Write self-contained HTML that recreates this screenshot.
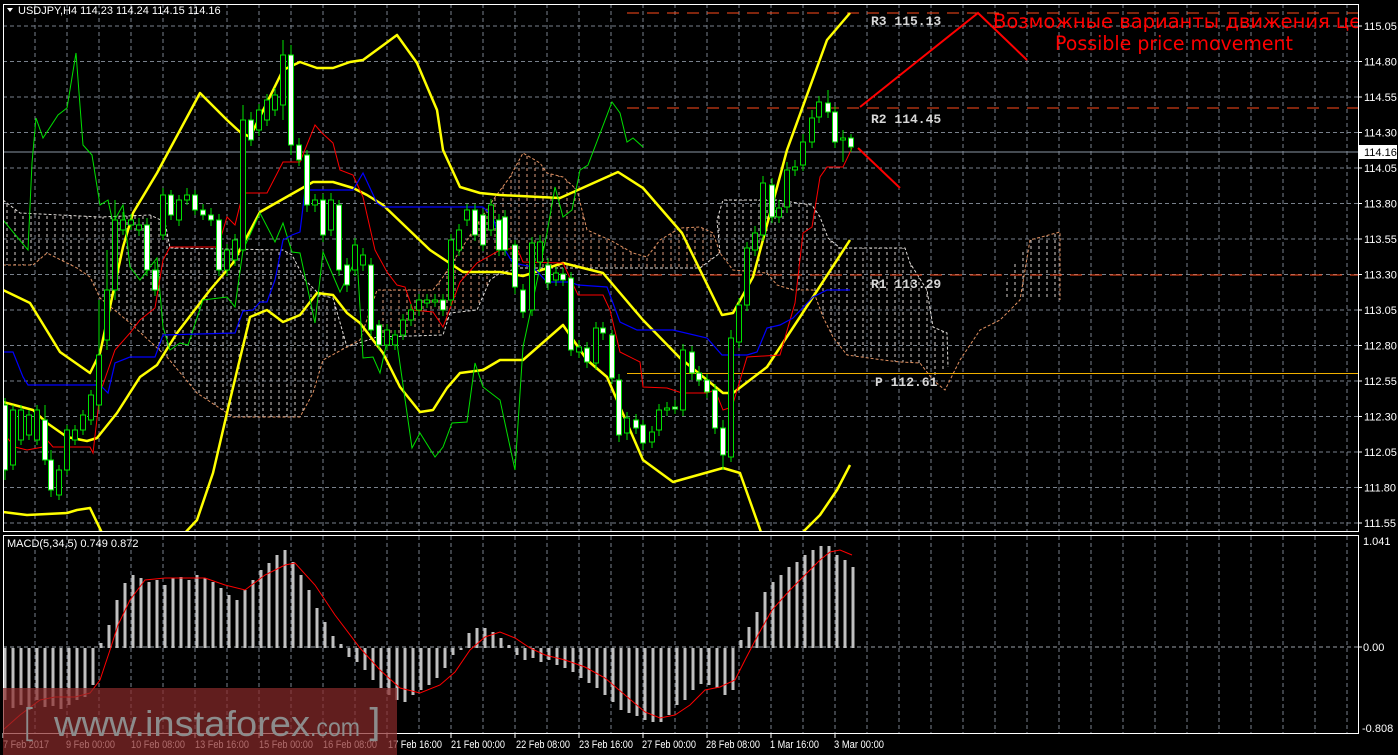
<!DOCTYPE html>
<html><head><meta charset="utf-8">
<style>
html,body{margin:0;padding:0;background:#000;}
svg{display:block;font-family:"Liberation Sans",sans-serif;}
</style></head>
<body>
<svg width="1398" height="755" viewBox="0 0 1398 755" xmlns="http://www.w3.org/2000/svg">
<defs>
<pattern id="hatchW" x="3" y="0" width="8" height="755" patternUnits="userSpaceOnUse">
<line x1="4" y1="0" x2="4" y2="755" stroke="#d8d0cc" stroke-width="1" stroke-dasharray="3,3"/>
</pattern>
<pattern id="hatchO" x="3" y="0" width="8" height="755" patternUnits="userSpaceOnUse">
<line x1="4" y1="0" x2="4" y2="755" stroke="#e0a080" stroke-width="1" stroke-dasharray="3,3"/>
</pattern>
<clipPath id="main"><rect x="3" y="4" width="1355" height="527"/></clipPath>
<clipPath id="macd"><rect x="3" y="536" width="1355" height="197"/></clipPath>
</defs>
<rect width="1398" height="755" fill="#000"/>

<!-- grid main -->
<g stroke="#79818c" stroke-width="1" stroke-dasharray="4,3" fill="none">
<path d="M3 26H1358M3 61.5H1358M3 97H1358M3 132.5H1358M3 168H1358M3 203.5H1358M3 239H1358M3 274.5H1358M3 310H1358M3 345.5H1358M3 381H1358M3 416.5H1358M3 452H1358M3 487.5H1358M3 523H1358"/>
<path d="M35 4V531M67 4V531M99 4V531M131 4V531M163 4V531M195 4V531M227 4V531M259 4V531M291 4V531M323 4V531M355 4V531M387 4V531M419 4V531M451 4V531M483 4V531M515 4V531M547 4V531M579 4V531M611 4V531M643 4V531M675 4V531M707 4V531M739 4V531M771 4V531M803 4V531M835 4V531M867 4V531M899 4V531M931 4V531M963 4V531M995 4V531M1027 4V531M1059 4V531M1091 4V531M1123 4V531M1155 4V531M1187 4V531M1219 4V531M1251 4V531M1283 4V531M1315 4V531M1347 4V531"/>
<path d="M35 536V733M67 536V733M99 536V733M131 536V733M163 536V733M195 536V733M227 536V733M259 536V733M291 536V733M323 536V733M355 536V733M387 536V733M419 536V733M451 536V733M483 536V733M515 536V733M547 536V733M579 536V733M611 536V733M643 536V733M675 536V733M707 536V733M739 536V733M771 536V733M803 536V733M835 536V733M867 536V733M899 536V733M931 536V733M963 536V733M995 536V733M1027 536V733M1059 536V733M1091 536V733M1123 536V733M1155 536V733M1187 536V733M1219 536V733M1251 536V733M1283 536V733M1315 536V733M1347 536V733"/>
<path d="M3 647H1358" stroke="#9aa0a8"/>
</g>

<g clip-path="url(#main)">
<!-- cloud -->
<polygon fill="url(#hatchW)" points="3,200 20,213 60,215 100,217 150,215 165,222 170,248 283,250 292,255 305,280 320,295 333,298 347,347 323,360 313,393 300,417 233,417 197,393 167,357 130,323 100,298 90,277 77,268 47,253 33,265 3,265"/>
<polygon fill="url(#hatchO)" points="377,290 433,290 443,277 493,200 510,177 523,153 540,163 547,173 563,177 577,190 587,230 610,240 633,253 647,257 660,240 680,228 700,227 713,233 720,253 700,268 600,268 520,268 500,273 490,280 477,310 450,313 443,335 377,337"/>
<polygon fill="url(#hatchW)" points="717,220 723,200 777,200 812,205 820,217 828,238 840,248 905,248 910,263 927,290 933,327 947,333 948,367 933,380 920,363 900,362 883,360 847,355 833,337 823,317 813,290 793,290 777,285 767,273 733,270 720,253"/>
<polygon fill="url(#hatchW)" points="1000,300 1010,270 1030,240 1060,232 1060,300 1030,300"/>
<g fill="none" stroke-width="1" stroke-dasharray="3,2">
<polyline stroke="#e0dcd8" points="3,200 20,213 60,215 100,217 150,215 165,222 170,248 283,250 292,255 305,280 320,295 333,298 347,347 377,337 443,335 450,313 477,310 490,280 500,273 520,268 700,268 720,253 717,220 723,200 777,200 812,205 820,217 828,238 840,248 905,248 910,263 927,290 933,327 947,333 948,367"/>
<polyline stroke="#e09060" points="3,265 33,265 47,253 77,268 90,277 100,298 130,323 167,357 197,393 233,417 300,417 313,393 323,360 347,347 360,340 377,290 433,290 443,277 493,200 510,177 523,153 540,163 547,173 563,177 577,190 587,230 610,240 633,253 647,257 660,240 680,228 700,227 713,233 720,253 733,270 767,273 777,285 793,290 813,290 823,317 833,337 847,355 883,360 900,362 920,363 933,380 945,390 960,360 980,330 1000,320 1020,300 1030,240 1060,232 1060,300"/>
</g>

<!-- pivot lines -->
<g fill="none" stroke="#ff4a1a" stroke-width="1" stroke-dasharray="12,8">
<path d="M627 13H1358M627 108H1358M590 275H1358"/>
</g>
<path d="M627 373.5H1358" stroke="#f0b000" stroke-width="1"/>
<path d="M3 152H1358" stroke="#8a96a4" stroke-width="1"/>

<!-- yellow bands -->
<g fill="none" stroke="#ffff00" stroke-width="2.5" stroke-linejoin="round">
<polyline points="3,290 30,303 60,352 90,373 100,353 123,247 133,213 157,173 200,93 227,120 240,132 250,137 283,70 300,62 317,68 333,68 350,62 363,60 397,35 417,63 437,110 443,150 460,187 480,193 500,195 560,198 618,172 643,188 682,233 722,315 733,313 753,277 787,150 827,40 850,13"/>
<polyline points="3,402 33,410 47,423 67,437 87,441 97,438 117,413 140,377 157,365 177,333 210,290 233,263 260,212 290,195 313,182 333,182 353,188 367,195 383,205 430,250 463,272 500,272 523,276 563,263 603,273 643,320 680,358 723,393 733,393 767,367 800,317 850,240"/>
<polyline points="3,512 27,515 67,513 77,510 90,508 103,535"/>
<polyline points="183,535 197,520 213,473 230,400 250,317 267,310 283,322 300,315 317,293 333,295 347,313 360,323 383,353 400,387 420,412 433,410 447,388 460,373 483,370 500,360 523,360 563,325 587,360 607,377 643,460 673,482 723,468 740,473 762,535"/>
<polyline points="800,535 820,515 837,490 850,465"/>
</g>

<!-- green chikou -->
<polyline fill="none" stroke="#00e000" stroke-width="1" points="3,220 28,250 32,163 36,118 43,138 58,115 67,108 76,53 83,145 92,155 100,205 108,200 113,223 123,205 130,267 140,280 157,258 163,327 170,350 180,343 188,345 203,300 227,297 235,307 243,250 260,213 275,242 283,223 292,252 300,253 315,323 323,252 340,292 357,257 363,358 373,357 380,373 388,337 397,343 412,448 420,433 435,457 443,447 452,423 467,422 475,363 483,387 500,400 515,470 523,347 533,300 547,233 555,187 563,217 572,210 580,170 588,165 612,102 620,113 627,142 633,138 643,147"/>
<!-- red tenkan -->
<polyline fill="none" stroke="#ff0000" stroke-width="1" points="3,433 15,447 27,450 43,447 47,440 53,447 90,447 93,453 100,393 115,350 130,333 140,320 155,308 163,260 170,247 218,247 227,217 235,225 243,193 267,193 283,162 300,162 315,125 322,133 333,143 340,170 353,175 363,197 375,250 387,272 397,285 405,287 413,310 433,312 443,327 460,282 477,263 500,250 517,248 523,262 563,263 578,295 603,295 610,310 620,352 640,362 643,387 667,388 682,393 707,393 715,390 723,410 732,407 747,357 780,355 795,303 803,233 812,227 820,177 827,167 843,167 852,148"/>
<!-- blue kijun -->
<polyline fill="none" stroke="#0000ff" stroke-width="1.2" points="3,352 13,352 23,377 28,385 100,385 108,393 115,363 130,357 155,357 163,335 235,333 243,311 253,310 260,302 267,302 275,280 283,240 292,235 300,232 305,190 353,190 363,173 377,203 383,207 483,207 493,217 500,242 513,263 533,267 547,282 570,282 578,285 607,287 620,322 637,330 673,330 707,338 722,355 747,355 757,352 767,328 780,325 793,318 813,297 827,290 850,290"/>

<!-- candles: wicks -->
<g stroke="#00e000" stroke-width="1" fill="none">
<path d="M5 398V480M13 405V470M21 405V445M29 410V440M37 405V445M45 405V465M51 450V497M59 465V500M67 425V475M75 425V445M83 410V435M91 390V425M99 300V410M107 250V350M115 200V300M123 212V235M131 214V230M139 218V236M147 218V276M155 262V296M163 188V240M171 190V220M179 195V226M187 188V205M195 190V215M203 204V220M211 208V226M219 214V276M227 244V276M235 234V266M243 105V252M251 112V146M259 104V136M267 94V126M275 88V116M283 40V120M291 45V155M299 138V166M307 150V212M315 194V212M323 194V242M331 193V236M339 200V276M347 258V292M355 238V276M363 248V271M371 258V336M379 320V350M387 324V350M395 330V350M403 314V340M411 304V326M419 294V316M427 294V308M435 294V307M443 294V316M451 234V306M459 224V256M467 204V226M475 204V241M483 209V251M491 199V236M499 214V256M505 210V256M515 240V294M523 284V318M532 237V316M540 235V268M548 258V290M556 267V286M563 268V286M571 272V356M579 340V358M587 342V368M596 322V370M603 322V340M612 330V384M619 374V442M627 412V440M636 414V434M643 420V450M652 426V448M659 404V436M667 402V416M675 400V414M683 344V416M692 346V380M699 366V386M707 374V398M715 384V434M723 420V470M731 330V462M739 298V348M747 242V311M755 226V256M763 176V241M772 178V223M779 200V223M787 162V213M795 160V176M803 134V171M812 110V148M819 96V123M828 90V118M835 106V148M843 130V162M851 134V152"/>
</g>
<!-- bear bodies (white) -->
<g fill="#ffffff" stroke="#00e000" stroke-width="1">
<rect x="2.5" y="405" width="5" height="65"/><rect x="42.5" y="420" width="5" height="40"/><rect x="48.5" y="460" width="5" height="30"/>
<rect x="144.5" y="225" width="5" height="45"/><rect x="152.5" y="270" width="5" height="20"/><rect x="168.5" y="195" width="5" height="20"/>
<rect x="192.5" y="195" width="5" height="15"/><rect x="200.5" y="210" width="5" height="5"/><rect x="208.5" y="215" width="5" height="5"/><rect x="216.5" y="220" width="5" height="50"/>
<rect x="248.5" y="120" width="5" height="20"/><rect x="288.5" y="55" width="5" height="90"/><rect x="296.5" y="145" width="5" height="15"/><rect x="304.5" y="155" width="5" height="50"/>
<rect x="320.5" y="200" width="5" height="35"/><rect x="336.5" y="205" width="5" height="65"/><rect x="344.5" y="265" width="5" height="20"/><rect x="368.5" y="265" width="5" height="65"/><rect x="376.5" y="325" width="5" height="20"/>
<rect x="440.5" y="300" width="5" height="10"/><rect x="472.5" y="210" width="5" height="25"/><rect x="480.5" y="215" width="5" height="30"/><rect x="496.5" y="220" width="5" height="30"/><rect x="502.5" y="217" width="5" height="33"/>
<rect x="512.5" y="245" width="5" height="42"/><rect x="520.5" y="290" width="5" height="22"/><rect x="545.5" y="265" width="5" height="18"/><rect x="560.5" y="274" width="5" height="6"/>
<rect x="568.5" y="278" width="5" height="72"/><rect x="584.5" y="348" width="5" height="14"/><rect x="600.5" y="328" width="5" height="5"/><rect x="609.5" y="335" width="5" height="43"/>
<rect x="616.5" y="380" width="5" height="55"/><rect x="633.5" y="420" width="5" height="8"/><rect x="640.5" y="425" width="5" height="18"/><rect x="672.5" y="407" width="5" height="2"/>
<rect x="689.5" y="352" width="5" height="21"/><rect x="696.5" y="373" width="5" height="7"/><rect x="704.5" y="380" width="5" height="12"/><rect x="712.5" y="390" width="5" height="38"/><rect x="720.5" y="428" width="5" height="27"/>
<rect x="769.5" y="185" width="5" height="32"/><rect x="825.5" y="103" width="5" height="9"/><rect x="832.5" y="112" width="5" height="30"/><rect x="848.5" y="138" width="5" height="9"/>
</g>
<!-- bull bodies (black) -->
<g fill="#000" stroke="#00e000" stroke-width="1">
<rect x="10.5" y="410" width="5" height="55"/><rect x="18.5" y="410" width="5" height="30"/><rect x="26.5" y="415" width="5" height="20"/><rect x="34.5" y="410" width="5" height="30"/>
<rect x="56.5" y="470" width="5" height="25"/><rect x="64.5" y="430" width="5" height="40"/><rect x="72.5" y="430" width="5" height="10"/><rect x="80.5" y="415" width="5" height="15"/><rect x="88.5" y="395" width="5" height="25"/>
<rect x="96.5" y="355" width="5" height="50"/><rect x="104.5" y="290" width="5" height="50"/><rect x="112.5" y="220" width="5" height="70"/><rect x="120.5" y="220" width="5" height="10"/><rect x="128.5" y="220" width="5" height="5"/><rect x="136.5" y="225" width="5" height="5"/>
<rect x="160.5" y="195" width="5" height="40"/><rect x="176.5" y="200" width="5" height="20"/><rect x="184.5" y="195" width="5" height="5"/><rect x="224.5" y="250" width="5" height="20"/><rect x="232.5" y="240" width="5" height="20"/>
<rect x="240.5" y="120" width="5" height="130"/><rect x="256.5" y="110" width="5" height="20"/><rect x="264.5" y="100" width="5" height="20"/><rect x="272.5" y="95" width="5" height="15"/><rect x="280.5" y="55" width="5" height="50"/>
<rect x="312.5" y="200" width="5" height="5"/><rect x="328.5" y="200" width="5" height="30"/><rect x="352.5" y="245" width="5" height="25"/><rect x="360.5" y="255" width="5" height="10"/>
<rect x="384.5" y="330" width="5" height="15"/><rect x="392.5" y="335" width="5" height="10"/><rect x="400.5" y="320" width="5" height="15"/><rect x="408.5" y="310" width="5" height="10"/><rect x="416.5" y="300" width="5" height="10"/><rect x="424.5" y="300" width="5" height="3"/><rect x="432.5" y="300" width="5" height="2"/>
<rect x="448.5" y="240" width="5" height="60"/><rect x="456.5" y="230" width="5" height="20"/><rect x="464.5" y="210" width="5" height="10"/><rect x="488.5" y="205" width="5" height="25"/>
<rect x="529.5" y="243" width="5" height="67"/><rect x="537.5" y="242" width="5" height="20"/><rect x="553.5" y="273" width="5" height="7"/><rect x="576.5" y="347" width="5" height="5"/><rect x="593.5" y="328" width="5" height="35"/>
<rect x="624.5" y="418" width="5" height="15"/><rect x="649.5" y="432" width="5" height="10"/><rect x="656.5" y="410" width="5" height="20"/><rect x="664.5" y="408" width="5" height="2"/><rect x="680.5" y="350" width="5" height="60"/>
<rect x="728.5" y="338" width="5" height="119"/><rect x="736.5" y="305" width="5" height="37"/><rect x="744.5" y="248" width="5" height="57"/><rect x="752.5" y="233" width="5" height="17"/><rect x="760.5" y="183" width="5" height="52"/>
<rect x="776.5" y="208" width="5" height="9"/><rect x="784.5" y="170" width="5" height="37"/><rect x="792.5" y="167" width="5" height="3"/><rect x="800.5" y="142" width="5" height="23"/><rect x="809.5" y="118" width="5" height="24"/><rect x="816.5" y="102" width="5" height="15"/><rect x="840.5" y="138" width="5" height="2"/>
</g>

<!-- red arrows -->
<polyline fill="none" stroke="#ff0000" stroke-width="2" points="860,107 978,13 1027,60"/>
<line x1="858" y1="148" x2="900" y2="188" stroke="#ff0000" stroke-width="2"/>

<!-- pivot labels -->
<g fill="#d8d8d8" font-family="'Liberation Mono',monospace" font-size="13" font-weight="bold">
<text x="871" y="25">R3 115.13</text>
<text x="871" y="123">R2 114.45</text>
<text x="871" y="288">R1 113.29</text>
<text x="875" y="386">P 112.61</text>
</g>
<g fill="#ff0000" font-family="'DejaVu Sans','Liberation Sans',sans-serif" font-size="19.5">
<text x="993" y="28">Возможные варианты движения цены</text>
<text x="1055" y="50" textLength="238" lengthAdjust="spacingAndGlyphs">Possible price movement</text>
</g>
</g>

<!-- MACD -->
<g clip-path="url(#macd)">
<path stroke="#c0c0c0" stroke-width="3" fill="none" d="M5 648V700M13 648V708M21 648V705M29 648V710M37 648V700M45 648V707M53 648V706M61 648V709M69 648V705M77 648V700M85 648V697M93 648V685M101 648V643M109 648V625M117 648V600M125 648V583M133 648V575M141 648V578M149 648V582M157 648V580M165 648V585M173 648V578M181 648V577M189 648V580M197 648V575M205 648V578M213 648V582M221 648V588M229 648V595M237 648V600M245 648V590M253 648V580M261 648V570M269 648V563M277 648V555M285 648V550M293 648V562M301 648V575M309 648V590M317 648V608M325 648V622M333 648V636M341 648V644M349 648V657M357 648V662M365 648V670M373 648V680M381 648V688M389 648V695M397 648V700M405 648V702M413 648V695M421 648V690M429 648V685M437 648V678M445 648V668M453 648V655M461 648V650M469 648V633M477 648V628M485 648V628M493 648V632M501 648V638M509 648V645M517 648V655M525 648V660M533 648V658M541 648V662M549 648V660M557 648V665M565 648V668M573 648V672M581 648V678M589 648V683M597 648V688M605 648V695M613 648V702M621 648V710M629 648V713M637 648V716M645 648V720M653 648V722M661 648V722M669 648V715M677 648V705M685 648V700M693 648V690M701 648V684M709 648V685M717 648V688M725 648V695M733 648V690M741 648V640M749 648V627M757 648V612M765 648V592M773 648V582M781 648V575M789 648V567M797 648V562M805 648V555M813 648V550M821 648V546M829 648V546M837 648V555M845 648V560M853 648V567"/>
<polyline fill="none" stroke="#ff0000" stroke-width="1" points="3,730 20,715 40,700 55,697 75,697 90,693 100,680 110,650 118,625 130,600 145,580 165,578 185,578 205,578 225,585 245,590 265,575 285,565 295,563 315,585 335,615 360,648 380,670 400,688 420,693 440,685 455,672 470,650 485,637 500,632 515,638 530,648 545,655 565,660 585,667 605,678 625,695 645,712 660,718 675,715 690,705 705,690 720,687 735,680 745,660 758,635 772,610 790,590 805,575 820,560 830,552 840,550 852,555"/>
</g>

<!-- borders -->
<g fill="none" stroke="#ffffff" stroke-width="1">
<path d="M3.5 4.5H1358.5V531.5H3.5Z"/>
<path d="M3.5 535.5H1358.5V733.5H3.5Z"/>
</g>
<!-- axis ticks -->
<g stroke="#fff" stroke-width="1">
<path d="M1358 26H1362M1358 61.5H1362M1358 97H1362M1358 132.5H1362M1358 168H1362M1358 203.5H1362M1358 239H1362M1358 274.5H1362M1358 310H1362M1358 345.5H1362M1358 381H1362M1358 416.5H1362M1358 452H1362M1358 487.5H1362M1358 523H1362M1358 647H1362"/>
<path d="M3 733V738M67 733V738M131 733V738M195 733V738M259 733V738M323 733V738M387 733V738M451 733V738M515 733V738M579 733V738M643 733V738M707 733V738M771 733V738M835 733V738"/>
</g>
<g fill="#ffffff" font-size="11">
<text x="1364" y="30">115.05</text><text x="1364" y="65.5">114.80</text><text x="1364" y="101">114.55</text><text x="1364" y="136.5">114.30</text>
<text x="1364" y="207.5">113.80</text><text x="1364" y="172">114.05</text><text x="1364" y="243">113.55</text><text x="1364" y="278.5">113.30</text>
<text x="1364" y="314">113.05</text><text x="1364" y="349.5">112.80</text><text x="1364" y="385">112.55</text><text x="1364" y="420.5">112.30</text>
<text x="1364" y="456">112.05</text><text x="1364" y="491.5">111.80</text><text x="1364" y="527">111.55</text>
<text x="1363" y="545">1.041</text><text x="1363" y="651">0.00</text><text x="1362" y="732">-0.808</text>
</g>
<rect x="1359" y="145" width="38" height="14" fill="#ffffff"/>
<text x="1364" y="156" fill="#000" font-size="11">114.16</text>

<g fill="#ffffff" font-size="11" lengthAdjust="spacingAndGlyphs">
<text x="3" y="748" textLength="46" lengthAdjust="spacingAndGlyphs">7 Feb 2017</text>
<text x="66" y="748" textLength="49" lengthAdjust="spacingAndGlyphs">9 Feb 00:00</text>
<text x="131" y="748" textLength="54" lengthAdjust="spacingAndGlyphs">10 Feb 08:00</text>
<text x="195" y="748" textLength="54" lengthAdjust="spacingAndGlyphs">13 Feb 16:00</text>
<text x="259" y="748" textLength="54" lengthAdjust="spacingAndGlyphs">15 Feb 00:00</text>
<text x="323" y="748" textLength="54" lengthAdjust="spacingAndGlyphs">16 Feb 08:00</text>
<text x="388" y="748" textLength="54" lengthAdjust="spacingAndGlyphs">17 Feb 16:00</text>
<text x="451" y="748" textLength="54" lengthAdjust="spacingAndGlyphs">21 Feb 00:00</text>
<text x="516" y="748" textLength="54" lengthAdjust="spacingAndGlyphs">22 Feb 08:00</text>
<text x="579" y="748" textLength="54" lengthAdjust="spacingAndGlyphs">23 Feb 16:00</text>
<text x="642" y="748" textLength="54" lengthAdjust="spacingAndGlyphs">27 Feb 00:00</text>
<text x="706" y="748" textLength="54" lengthAdjust="spacingAndGlyphs">28 Feb 08:00</text>
<text x="770" y="748" textLength="49" lengthAdjust="spacingAndGlyphs">1 Mar 16:00</text>
<text x="834" y="748" textLength="50" lengthAdjust="spacingAndGlyphs">3 Mar 00:00</text>
</g>

<!-- header -->
<path d="M7 8L13 8L10 12Z" fill="#fff"/>
<text x="18" y="14" fill="#ffffff" font-size="11">USDJPY,H4  114.23 114.24 114.15 114.16</text>
<text x="7" y="547" fill="#ffffff" font-size="11">MACD(5,34,5) 0.749 0.872</text>

<!-- watermark -->
<rect x="3" y="688" width="394" height="67" fill="#8a2b2b" fill-opacity="0.7"/>
<g fill="#8c8c8c">
<text x="22" y="736" font-size="38" font-family="'DejaVu Sans',sans-serif" font-weight="300">[</text>
<text x="54" y="736" font-size="36" textLength="256" lengthAdjust="spacingAndGlyphs">www.instaforex</text>
<text x="310" y="736" font-size="26" textLength="50" lengthAdjust="spacingAndGlyphs">.com</text>
<text x="366" y="736" font-size="38" font-family="'DejaVu Sans',sans-serif">]</text>
</g>
</svg>
</body></html>
